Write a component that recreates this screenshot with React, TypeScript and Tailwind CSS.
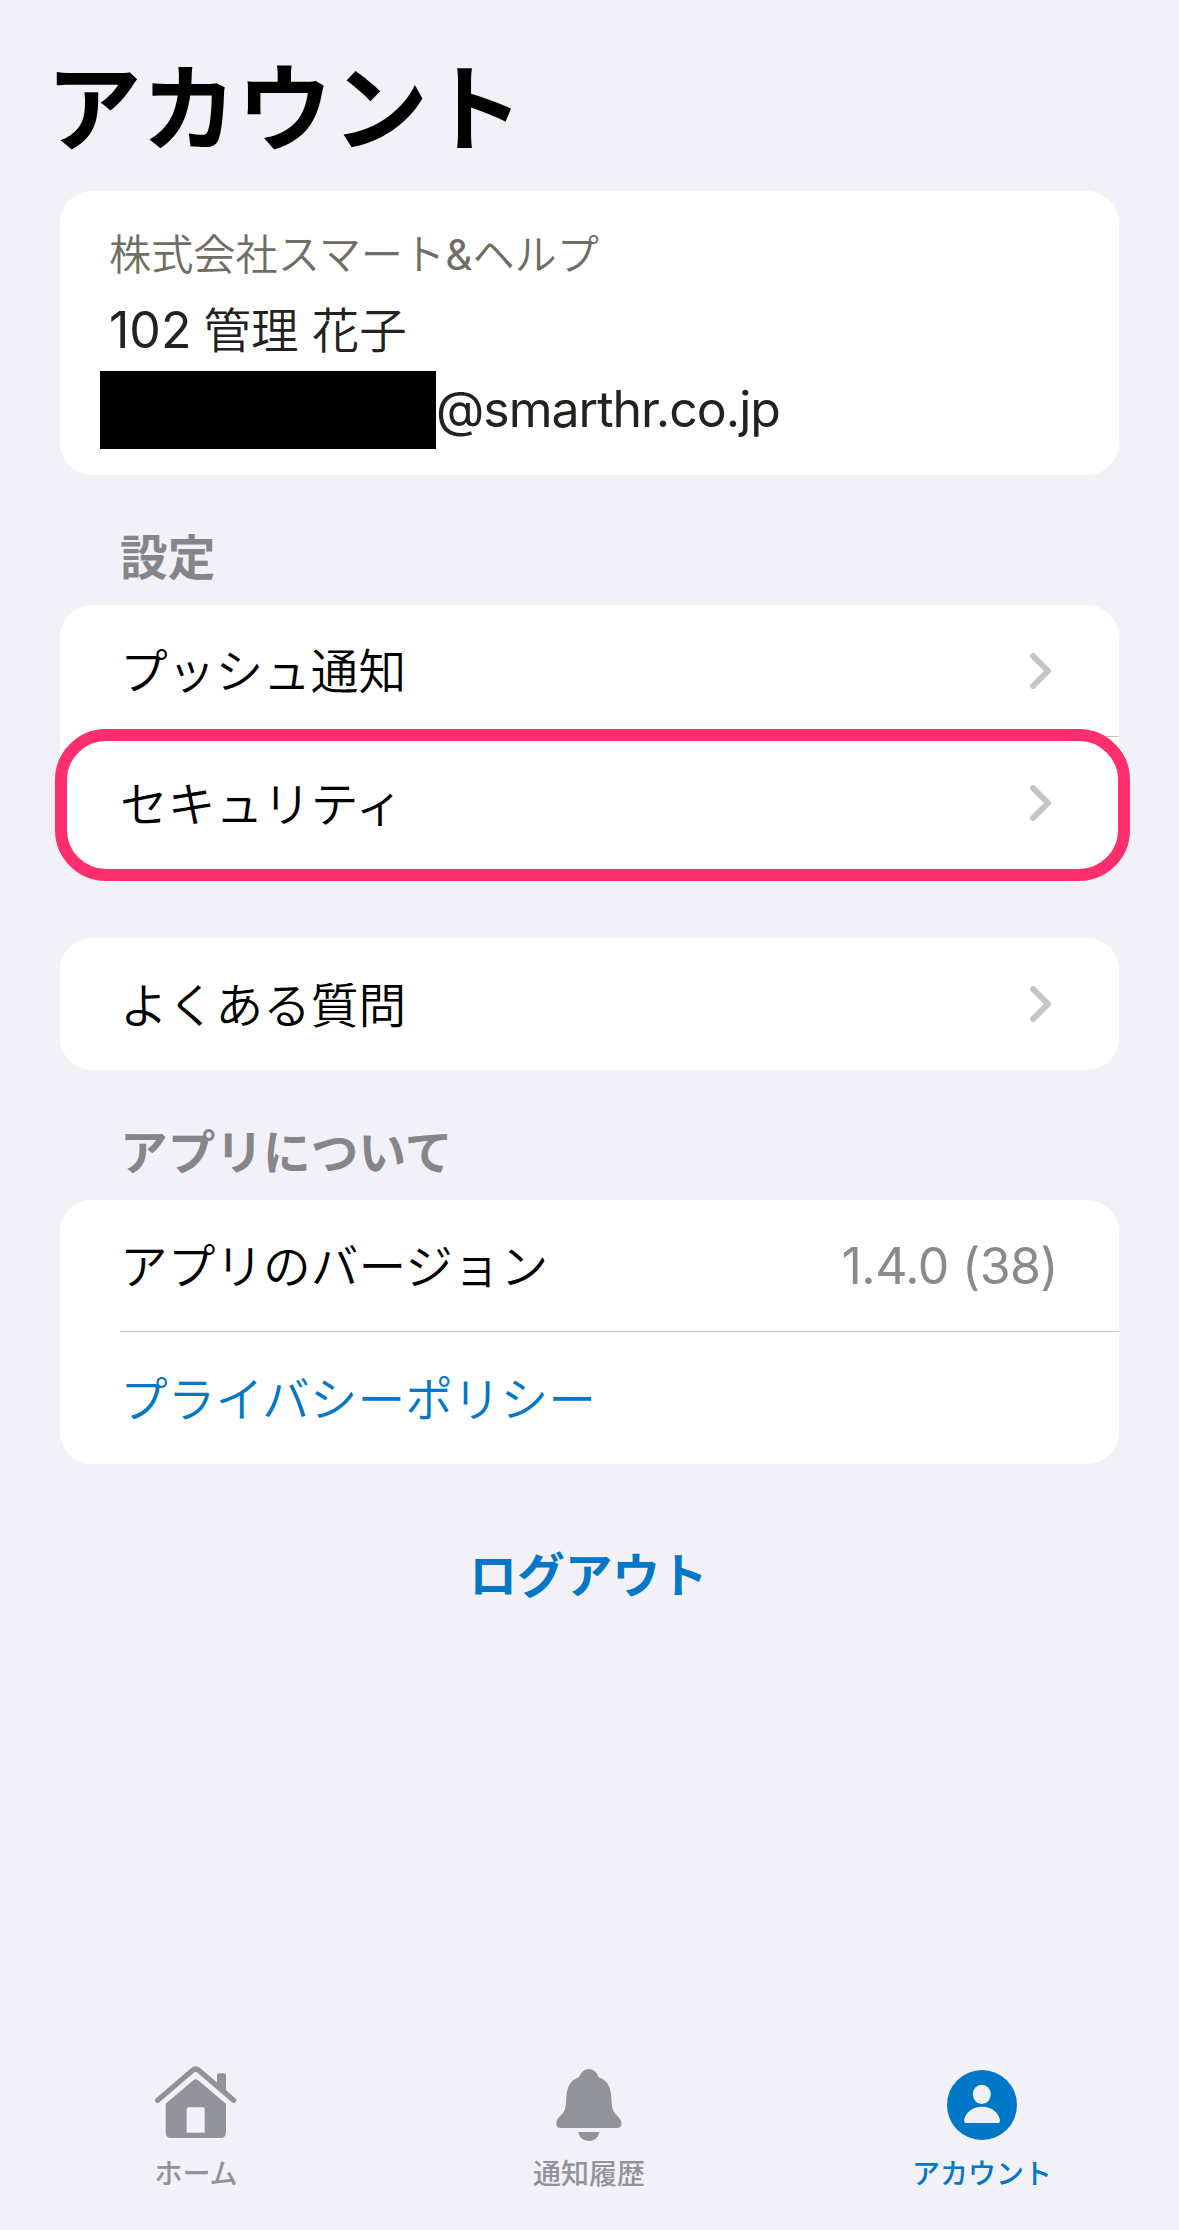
import type { ReactNode } from 'react';
import clsx from 'clsx';

// ─── Icons ────────────────────────────────────────────────────────────────────

function ChevronIcon() {
  return (
    <svg width="22" height="36" viewBox="0 0 22 36" fill="none">
      <path d="M3 3 L18 18 L3 33" stroke="#c5c5c7" strokeWidth="6" strokeLinecap="round" strokeLinejoin="round" />
    </svg>
  );
}

function HomeIcon() {
  return (
    <svg width="82" height="72" viewBox="75 77 246 216" fill="currentColor">
      <path
        d="M83 180 L188 90 Q197 82 206 90 L311 180"
        fill="none"
        stroke="currentColor"
        strokeWidth="16"
        strokeLinecap="round"
        strokeLinejoin="round"
      />
      <path d="M261 132 V105 Q261 99 267 99 H282 Q288 99 288 105 V154 Z" />
      <path
        fillRule="evenodd"
        d="M107 190 L190 120 Q197 114 204 120 L288 190 V274 Q288 294 268 294 H127 Q107 294 107 274 Z M175 201 Q170 201 170 206 V277 H224 V206 Q224 201 219 201 Z"
      />
    </svg>
  );
}

function BellIcon() {
  return (
    <svg width="66" height="72" viewBox="140 87 198 216" fill="currentColor">
      <path d="M154 264 C142 264 138 253 142 243 C147 230 161 223 166 210 C173 190 168 165 177 141 C183 126 194 117 209 112 C214 97 225 87 238 87 C252 87 263 97 268 112 C283 117 294 126 300 141 C309 165 304 190 311 210 C316 223 330 230 335 243 C339 253 335 264 323 264 Z" />
      <path d="M207 276 H270 C268 292 255 303 238.500 303 C222 303 209 292 207 276 Z" />
    </svg>
  );
}

function AccountIcon() {
  return (
    <svg width="70" height="70" viewBox="0 0 210 210">
      <circle cx="105" cy="105" r="105" fill="currentColor" />
      <ellipse cx="104.500" cy="73" rx="27" ry="29" fill="#f2f1f7" />
      <path d="M57 159 Q51 159 51 152 C54 128 76 110 105 110 C134 110 156 128 159 152 Q159 159 153 159 Z" fill="#f2f1f7" />
    </svg>
  );
}

// ─── List ─────────────────────────────────────────────────────────────────────

function Card({ children, className }: { children: ReactNode; className?: string }) {
  return <section className={clsx('rounded-[32px] bg-white', className)}>{children}</section>;
}

function SectionTitle({ children }: { children: ReactNode }) {
  return <h2 className="pl-[60px] text-[47.700px] leading-[60px] font-bold text-[#86858a]">{children}</h2>;
}

type RowProps = {
  label: string;
  value?: string;
  link?: boolean;
  chevron?: boolean;
  divider?: boolean;
};

function Row({ label, value, link, chevron, divider }: RowProps) {
  return (
    <div className="h-[132px] pl-[60px]">
      <div
        className={clsx(
          'flex h-full items-center justify-between',
          divider && 'border-b border-[#c6c6c8]',
          value ? 'pr-[61px]' : 'pr-[67px]'
        )}
      >
        <span
          className={clsx('pt-[3px] text-[47.700px] leading-[60px] font-[350]', link ? 'text-[#0077c7]' : 'text-black')}
        >
          {label}
        </span>
        {value && <span className="text-[50px] leading-[60px] tracking-[-0.600px] text-[#8a8a8e]">{value}</span>}
        {chevron && <ChevronIcon />}
      </div>
    </div>
  );
}

// ─── Tab bar ──────────────────────────────────────────────────────────────────

const TABS = [
  { id: 'home', label: 'ホーム', icon: <HomeIcon />, offset: 'pt-[6px]' },
  { id: 'notifications', label: '通知履歴', icon: <BellIcon />, offset: 'pt-[9px]' },
  { id: 'account', label: 'アカウント', icon: <AccountIcon />, offset: 'pt-[10px]' },
];

function TabBar({ active }: { active: string }) {
  return (
    <nav className="mt-auto grid h-[170px] grid-cols-3">
      {TABS.map(tab => (
        <button
          key={tab.id}
          className={clsx(
            'flex flex-col items-center pr-[1px] text-[28px] leading-[40px] font-medium',
            tab.id === active ? 'text-[#0077c7]' : 'text-[#929398]'
          )}
        >
          <span className={clsx('h-[94px]', tab.offset)}>{tab.icon}</span>
          {tab.label}
        </button>
      ))}
    </nav>
  );
}

// ─── App ──────────────────────────────────────────────────────────────────────

export default function App() {
  return (
    <div className="flex h-[2230px] w-[1179px] flex-col bg-[#f2f1f7] font-['Inter','Noto_Sans_CJK_JP',sans-serif]">
      <main className="flex flex-col px-[60px]">
        <h1 className="-ml-[14px] pt-[49px] text-[95.500px] leading-[120px] font-bold text-black">アカウント</h1>

        {/* Profile */}
        <Card className="mt-[22px] h-[284px] pt-[34px] pl-[49px] text-[#23221e]">
          <p className="text-[42.200px] leading-[60px] font-[350] text-[#706d65]">
            株式会社スマート<span className="font-normal">&amp;</span>ヘルプ
          </p>
          <p className="mt-[7px] text-[50px] leading-[76px]">
            102 <span className="-ml-[2px] text-[47.500px] font-[350]">管理 花子</span>
          </p>
          <div className="-ml-[9px] mt-[2px] flex h-[78px] items-center">
            <span className="h-[78px] w-[336px] bg-black" />
            <span className="pb-[2px] text-[50px] leading-[76px] tracking-[-1px]">@smarthr.co.jp</span>
          </div>
        </Card>

        {/* Settings */}
        <div className="mt-[53px]">
          <SectionTitle>設定</SectionTitle>
        </div>
        <Card className="relative mt-[17px]">
          <Row label="プッシュ通知" chevron divider />
          <Row label="セキュリティ" chevron />
          <div className="absolute -right-[11px] -bottom-3 -left-[5px] h-[152px] rounded-[51px] border-12 border-[#ff2f6e]" />
        </Card>

        <Card className="mt-[69px]">
          <Row label="よくある質問" chevron />
        </Card>

        {/* About */}
        <div className="mt-[53px]">
          <SectionTitle>アプリについて</SectionTitle>
        </div>
        <Card className="mt-[17px]">
          <Row label="アプリのバージョン" value="1.4.0 (38)" divider />
          <Row label="プライバシーポリシー" link />
        </Card>

        <button className="mt-[82px] mr-[2px] self-center text-[47.700px] leading-[60px] font-bold text-[#0077c7]">
          ログアウト
        </button>
      </main>

      <TabBar active="account" />
    </div>
  );
}
